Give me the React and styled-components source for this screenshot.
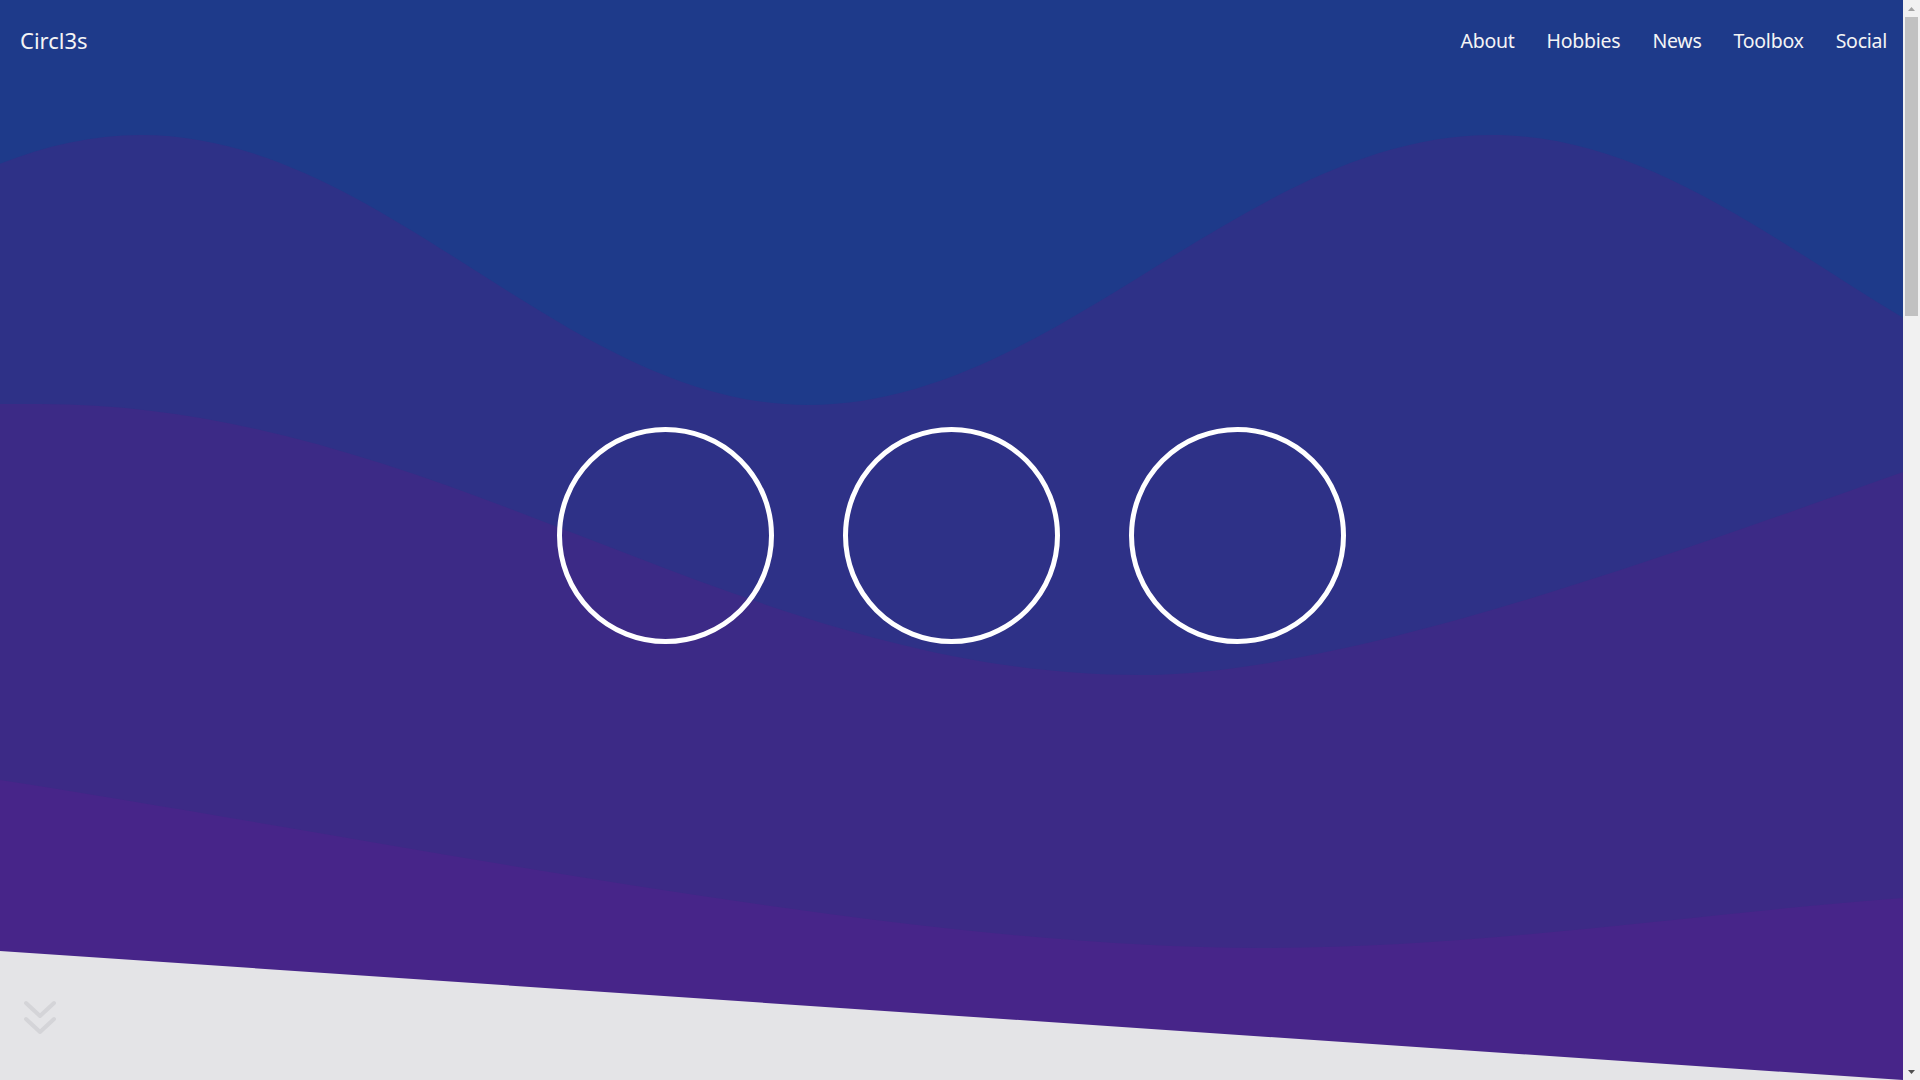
import React from "react";
import styled, { createGlobalStyle } from "styled-components";

const GlobalStyle = createGlobalStyle`
  html, body {
    margin: 0;
    padding: 0;
  }
  body {
    background: #e4e4e7;
    font-family: "Noto Sans", "Open Sans", Arial, sans-serif;
  }
`;

const Shell = styled.div`
  display: grid;
  grid-template-columns: 1fr 17px;
`;

const Page = styled.div`
  min-width: 0;
`;

const Hero = styled.section`
  position: relative;
  height: 100vh;
  display: flex;
  flex-direction: column;
  background: #1e3a8a;
  overflow: hidden;
`;

const Waves = styled.svg`
  position: absolute;
  inset: 0;
  width: 100%;
  height: 100%;
  display: block;
  z-index: 0;
`;

const Header = styled.header`
  position: relative;
  z-index: 1;
  height: 80px;
  display: flex;
  align-items: center;
  justify-content: space-between;
  padding-left: 20px;
`;

const Logo = styled.a`
  font-size: 22px;
  color: #f4f4f5;
  text-decoration: none;
`;

const Nav = styled.nav`
  display: flex;
  align-items: center;
`;

const NavLink = styled.a`
  padding: 0 16px;
  font-size: 19.5px;
  letter-spacing: -0.25px;
  color: #f4f4f5;
  text-decoration: none;
`;

const Stage = styled.main`
  position: relative;
  z-index: 1;
  flex: 1;
  display: flex;
  align-items: center;
  justify-content: center;
  gap: 69px;
`;

const Ring = styled.div`
  width: 217px;
  height: 217px;
  box-sizing: border-box;
  border: 5px solid #ffffff;
  border-radius: 50%;
`;

const Footer = styled.div`
  position: relative;
  z-index: 1;
  height: 90px;
  box-sizing: border-box;
  padding: 10px 0 0 22px;
`;

const ScrollHint = styled.button`
  display: block;
  width: 36px;
  height: 34px;
  padding: 0;
  border: 0;
  background: none;
  cursor: pointer;
`;

const Below = styled.section`
  height: 2698px;
  background: #e4e4e7;
`;

/* fake window scrollbar, the headless browser hides the real one */
const Rail = styled.aside`
  position: sticky;
  top: 0;
  align-self: start;
  height: 100vh;
  display: flex;
  flex-direction: column;
  background: #f1f1f1;
`;

const RailArrow = styled.div`
  height: 17px;
  display: flex;
  align-items: center;
  justify-content: center;
`;

const Track = styled.div`
  flex: 1;
  padding: 0 2px;
`;

const Thumb = styled.div`
  height: 299px;
  background: #c1c1c1;
`;

const links = ["About", "Hobbies", "News", "Toolbox", "Social"];

function WaveBackdrop() {
  return (
    <Waves viewBox="0 0 1903 1080" preserveAspectRatio="none" aria-hidden="true">
      <path
        fill="#2e3187"
        d="M-526,405 C-283,405 -102,135 141,135 C384,135 565,405 808,405 C1057,405 1244,135 1493,135 C1736,135 1917,405 2160,405 L2160,1080 L-526,1080 Z"
      />
      <path
        fill="#3c2a86"
        d="M0,404 L40,404 C440,404 740,675 1140,675 C1340,675 1655,560 1903,472 L1903,1080 L0,1080 Z"
      />
      <path
        fill="#472589"
        d="M0,780 C400,842 900,948 1260,948 C1480,948 1680,915 1903,898 L1903,1080 L0,1080 Z"
      />
      <polygon fill="#e4e4e7" points="0,951 1903,1080 0,1080" />
    </Waves>
  );
}

function Scrollbar() {
  return (
    <Rail aria-hidden="true">
      <RailArrow>
        <svg width="7" height="4" viewBox="0 0 7 4">
          <polygon points="0,4 3.5,0 7,4" fill="#a3a3a3" />
        </svg>
      </RailArrow>
      <Track>
        <Thumb />
      </Track>
      <RailArrow>
        <svg width="7" height="4" viewBox="0 0 7 4">
          <polygon points="0,0 7,0 3.5,4" fill="#505050" />
        </svg>
      </RailArrow>
    </Rail>
  );
}

export default function App() {
  return (
    <>
      <GlobalStyle />
      <Shell>
        <Page>
          <Hero>
            <WaveBackdrop />
            <Header>
              <Logo href="#">Circl3s</Logo>
              <Nav>
                {links.map((l) => (
                  <NavLink key={l} href={"#" + l.toLowerCase()}>
                    {l}
                  </NavLink>
                ))}
              </Nav>
            </Header>
            <Stage>
              <Ring />
              <Ring />
              <Ring />
            </Stage>
            <Footer>
              <ScrollHint aria-label="Scroll down">
                <svg width="36" height="34" viewBox="0 0 36 34" fill="none">
                  <polyline
                    points="4,3 18,16 32,3"
                    stroke="#d4d4d8"
                    strokeWidth="4"
                    strokeLinecap="round"
                    strokeLinejoin="round"
                  />
                  <polyline
                    points="4,19 18,32 32,19"
                    stroke="#d4d4d8"
                    strokeWidth="4"
                    strokeLinecap="round"
                    strokeLinejoin="round"
                  />
                </svg>
              </ScrollHint>
            </Footer>
          </Hero>
          <Below />
        </Page>
        <Scrollbar />
      </Shell>
    </>
  );
}
